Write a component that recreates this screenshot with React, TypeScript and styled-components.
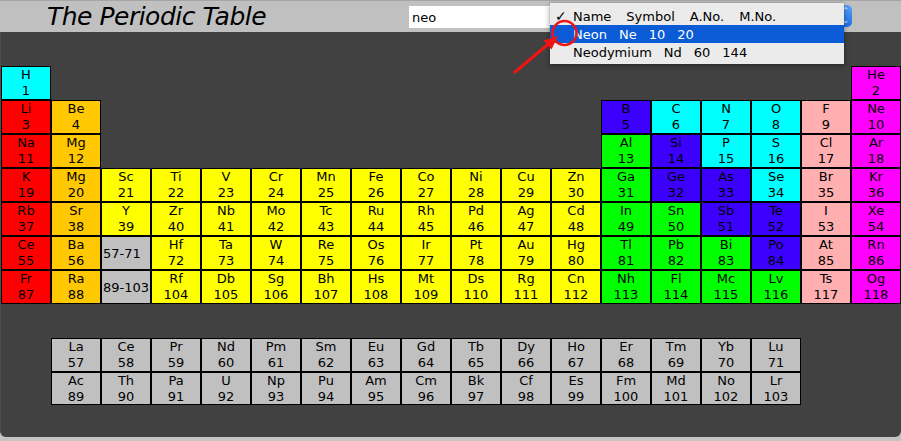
import React from "react";
import styled, { createGlobalStyle } from "styled-components";

const GlobalStyle = createGlobalStyle`
  html, body { margin: 0; padding: 0; background: #c4c4c4; }
  body { font-family: "DejaVu Sans", "Liberation Sans", sans-serif; }
  * { box-sizing: border-box; }
`;

const COLORS: Record<string, string> = {
  c: "#00ffff",
  r: "#ff0000",
  o: "#ffc800",
  t: "#ffff00",
  n: "#00ff00",
  b: "#3c00ff",
  p: "#ffafaf",
  g: "#ff00ff",
  s: "#c0c0c0",
};

type El = { row: number; col: number; sym: string; num: string; cat: string };

const el = (row: number, col: number, sym: string, num: number, cat: string): El => ({
  row,
  col,
  sym,
  num: String(num),
  cat,
});

const run = (row: number, startCol: number, syms: string, startNum: number, cats: string): El[] =>
  syms.split(" ").map((s, i) => el(row, startCol + i, s, startNum + i, cats[i]));

const MAIN: El[] = [
  el(1, 1, "H", 1, "c"),
  el(1, 18, "He", 2, "g"),
  el(2, 1, "Li", 3, "r"),
  el(2, 2, "Be", 4, "o"),
  ...run(2, 13, "B C N O F Ne", 5, "bcccpg"),
  el(3, 1, "Na", 11, "r"),
  el(3, 2, "Mg", 12, "o"),
  ...run(3, 13, "Al Si P S Cl Ar", 13, "nbccpg"),
  ...run(4, 1, "K Mg Sc Ti V Cr Mn Fe Co Ni Cu Zn Ga Ge As Se Br Kr", 19, "rottttttttttnbbcpg"),
  ...run(5, 1, "Rb Sr Y Zr Nb Mo Tc Ru Rh Pd Ag Cd In Sn Sb Te I Xe", 37, "rottttttttttnnbbpg"),
  el(6, 1, "Ce", 55, "r"),
  el(6, 2, "Ba", 56, "o"),
  ...run(6, 4, "Hf Ta W Re Os Ir Pt Au Hg Tl Pb Bi Po At Rn", 72, "tttttttttnnnbpg"),
  el(7, 1, "Fr", 87, "r"),
  el(7, 2, "Ra", 88, "o"),
  ...run(7, 4, "Rf Db Sg Bh Hs Mt Ds Rg Cn Nh Fl Mc Lv Ts Og", 104, "tttttttttnnnnpg"),
];

const PLACEHOLDERS = [
  { row: 6, col: 3, label: "57-71" },
  { row: 7, col: 3, label: "89-103" },
];

const SERIES: El[] = [
  ...run(1, 1, "La Ce Pr Nd Pm Sm Eu Gd Tb Dy Ho Er Tm Yb Lu", 57, "sssssssssssssss"),
  ...run(2, 1, "Ac Th Pa U Np Pu Am Cm Bk Cf Es Fm Md No Lr", 89, "sssssssssssssss"),
];

const Page = styled.div`
  position: relative;
  width: 901px;
  height: 441px;
  display: flex;
  flex-direction: column;
  overflow: hidden;
`;

const TopBar = styled.header`
  height: 32px;
  flex: none;
  display: flex;
  align-items: center;
  padding: 0 49px 0 47px;
  background: #c0c0c0;
  border-top: 1px solid #a6a6a6;
`;

const Title = styled.h1`
  margin: 0;
  font-family: "DejaVu Sans", "Liberation Sans", sans-serif;
  font-style: italic;
  font-weight: normal;
  font-size: 25px;
  letter-spacing: -0.5px;
  line-height: 28px;
  color: #000;
  margin-top: 0;
`;

const Combo = styled.div`
  position: relative;
  margin-left: auto;
  width: 443px;
  height: 22px;
  display: flex;
  margin-top: 1px;
`;

const SearchInput = styled.input`
  flex: 1;
  min-width: 0;
  border: none;
  outline: none;
  padding: 0 3px;
  font-family: "DejaVu Sans", "Liberation Sans", sans-serif;
  font-size: 13px;
  color: #000;
  background: #fff;
`;

const StepButton = styled.div`
  width: 17px;
  height: 22px;
  margin-top: -1px;
  border-radius: 0 5px 5px 0;
  background: linear-gradient(#5aa0fa, #1f6fe6);
  color: #dfeaff;
  font-size: 9px;
  line-height: 9px;
  display: flex;
  flex-direction: column;
  align-items: center;
  justify-content: center;
  padding-left: 4px;
`;

const Menu = styled.div`
  position: absolute;
  left: 141px;
  top: -3px;
  width: 294px;
  height: 61px;
  padding: 4px 0 3px;
  background: #ebebeb;
  box-shadow: 0 2px 6px rgba(0, 0, 0, 0.35), 0 0 0 1px rgba(0, 0, 0, 0.08);
  font-family: "DejaVu Sans", "Liberation Sans", sans-serif;
  font-size: 13px;
  z-index: 2;
`;

const MenuRow = styled.div<{ $selected?: boolean; $gap: number }>`
  height: 18px;
  display: flex;
  align-items: center;
  gap: ${(p) => p.$gap}px;
  padding-left: 23px;
  white-space: pre;
  color: ${(p) => (p.$selected ? "#fff" : "#000")};
  background: ${(p) => (p.$selected ? "#0b5bd7" : "transparent")};
  position: relative;
`;

const Check = styled.span`
  position: absolute;
  left: 5px;
  top: 0;
  line-height: 18px;
  font-size: 14px;
  font-weight: bold;
`;

const Panel = styled.main`
  flex: none;
  height: 405px;
  background: #414141;
  border-left: 1px solid #4e4e4e;
  border-radius: 0 0 6px 6px;
  padding-top: 34px;
`;

const MainGrid = styled.div`
  display: grid;
  grid-template-columns: repeat(18, 50px);
  grid-template-rows: repeat(7, 34px);
`;

const SeriesGrid = styled.div`
  margin: 34px 0 0 50px;
  display: grid;
  grid-template-columns: repeat(15, 50px);
  grid-template-rows: 34px 33px;
`;

const Cell = styled.div<{ $bg: string; $row: number; $col: number }>`
  grid-row: ${(p) => p.$row};
  grid-column: ${(p) => p.$col};
  border: 1px solid #000;
  background: ${(p) => p.$bg};
  color: #000;
  display: flex;
  flex-direction: column;
  align-items: center;
  justify-content: center;
  font-size: 13px;
  line-height: 16px;
`;

const Placeholder = styled.div<{ $row: number; $col: number }>`
  grid-row: ${(p) => p.$row};
  grid-column: ${(p) => p.$col};
  border: 1px solid #000;
  background: #c0c0c0;
  color: #000;
  display: flex;
  align-items: center;
  padding-left: 1px;
  font-size: 13px;
  white-space: nowrap;
  overflow: hidden;
`;

const Annotation = styled.svg`
  position: absolute;
  left: 0;
  top: 0;
  pointer-events: none;
  z-index: 3;
`;

const ElementCell = ({ e }: { e: El }) => (
  <Cell $bg={COLORS[e.cat]} $row={e.row} $col={e.col}>
    <span>{e.sym}</span>
    <span>{e.num}</span>
  </Cell>
);

export default function App() {
  return (
    <>
      <GlobalStyle />
      <Page>
        <TopBar>
          <Title>The Periodic Table</Title>
          <Combo>
            <SearchInput defaultValue="neo" />
            <StepButton>
              <span>⌃</span>
              <span>⌄</span>
            </StepButton>
            <Menu>
              <MenuRow $gap={15}>
                <Check>✓</Check>
                <span>Name</span>
                <span>Symbol</span>
                <span>A.No.</span>
                <span>M.No.</span>
              </MenuRow>
              <MenuRow $selected $gap={12}>
                <span>Neon</span>
                <span>Ne</span>
                <span>10</span>
                <span>20</span>
              </MenuRow>
              <MenuRow $gap={12}>
                <span>Neodymium</span>
                <span>Nd</span>
                <span>60</span>
                <span>144</span>
              </MenuRow>
            </Menu>
          </Combo>
        </TopBar>
        <Panel>
          <MainGrid>
            {MAIN.map((e) => (
              <ElementCell key={`${e.row}-${e.col}`} e={e} />
            ))}
            {PLACEHOLDERS.map((p) => (
              <Placeholder key={p.label} $row={p.row} $col={p.col}>
                {p.label}
              </Placeholder>
            ))}
          </MainGrid>
          <SeriesGrid>
            {SERIES.map((e) => (
              <ElementCell key={`s-${e.row}-${e.col}`} e={e} />
            ))}
          </SeriesGrid>
        </Panel>
        <Annotation width="901" height="441" viewBox="0 0 901 441">
          <circle cx="564.5" cy="33" r="12" fill="none" stroke="#f01414" strokeWidth="2.5" />
          <line x1="515" y1="72" x2="549" y2="43.5" stroke="#f01414" strokeWidth="3" strokeLinecap="round" />
          <polygon points="558,36 551.5,49.5 543.5,40.5" fill="#f01414" />
        </Annotation>
      </Page>
    </>
  );
}
